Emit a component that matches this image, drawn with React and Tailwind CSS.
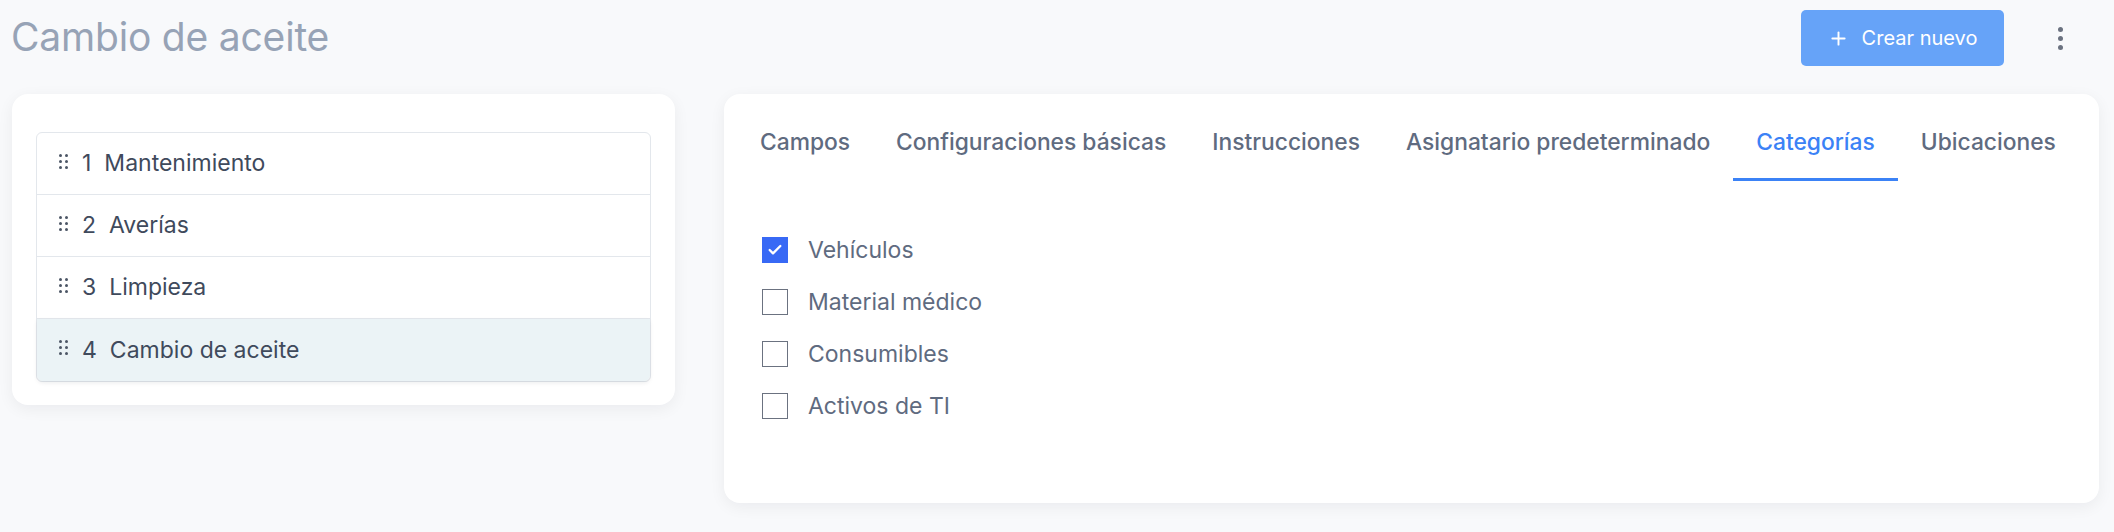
import { Check, Plus } from 'lucide-react';

const steps = [
    { n: 1, label: 'Mantenimiento' },
    { n: 2, label: 'Averías' },
    { n: 3, label: 'Limpieza' },
    { n: 4, label: 'Cambio de aceite', active: true },
];

const tabs = ['Campos', 'Configuraciones básicas', 'Instrucciones', 'Asignatario predeterminado', 'Categorías', 'Ubicaciones'];

const categories = [
    { label: 'Vehículos', checked: true },
    { label: 'Material médico' },
    { label: 'Consumibles' },
    { label: 'Activos de TI' },
];

function DragHandle() {
    return (
        <div className="grid grid-cols-2 gap-x-[3px] gap-y-[3px] w-[9px] -mt-[5px]">
            {[0, 1, 2, 3, 4, 5].map((i) => (
                <span key={i} className="w-[3px] h-[3px] rounded-full bg-[#4b5565]" />
            ))}
        </div>
    );
}

export default function App() {
    return (
        <div className="min-h-screen bg-[#f8f9fb] font-['Inter',sans-serif] pb-10">
            {/* Header */}
            <div className="h-[76px] flex items-center justify-between pl-[11px] pr-[34px]">
                <h1 className="text-[39px] font-normal text-[#97a3b6] tracking-[-0.2px] leading-none -mt-[3px]">Cambio de aceite</h1>
                <div className="flex items-center gap-[36px]">
                    <button className="h-[56px] w-[203px] rounded-[5px] bg-[#66a3f8] text-white flex items-center justify-center gap-[13px] text-[20px]">
                        <Plus size={21} strokeWidth={2.2} />
                        <span>Crear nuevo</span>
                    </button>
                    <div className="w-[40px] flex flex-col items-center gap-[4px]">
                        <span className="w-[5px] h-[5px] rounded-full bg-[#6b7280]" />
                        <span className="w-[5px] h-[5px] rounded-full bg-[#6b7280]" />
                        <span className="w-[5px] h-[5px] rounded-full bg-[#6b7280]" />
                    </div>
                </div>
            </div>

            <div className="mt-[18px] pl-[12px] pr-[15px] flex items-start gap-[49px]">
                {/* Steps card */}
                <div className="w-[663px] shrink-0 rounded-[16px] bg-white shadow-[0_4px_16px_rgba(15,23,42,0.06)] pt-[38px] px-[24px] pb-[23px]">
                    <div className="rounded-[6px] border border-[#e3e7ec]">
                        {steps.map((s) => (
                            <div
                                key={s.n}
                                className={`h-[62px] flex items-center pl-[22px] text-[23px] text-[#3f4a5c] ${s.n !== 4 ? 'border-b border-[#e3e7ec]' : ''} ${s.active ? 'bg-[#ebf3f6] shadow-[0_2px_4px_rgba(15,23,42,0.08)] rounded-b-[6px]' : ''}`}
                            >
                                <DragHandle />
                                <span className="ml-[14px]">{s.n}</span>
                                <span className="ml-[13px]">{s.label}</span>
                            </div>
                        ))}
                    </div>
                </div>

                {/* Settings card */}
                <div className="flex-1 min-w-0 h-[409px] rounded-[16px] bg-white shadow-[0_4px_16px_rgba(15,23,42,0.06)] pt-[34px] px-[13px]">
                    <div className="flex">
                        {tabs.map((t) => (
                            <div
                                key={t}
                                className={`shrink-0 whitespace-nowrap px-[23px] pb-[22px] border-b-[3px] text-[22.8px] font-medium leading-[28px] ${t === 'Categorías' ? 'border-[#3b82f6] text-[#3b82f6]' : 'border-transparent text-[#5f6b80]'}`}
                            >
                                {t}
                            </div>
                        ))}
                    </div>

                    <div className="mt-[56px] pl-[25px] flex flex-col gap-[26px]">
                        {categories.map((c) => (
                            <label key={c.label} className="flex items-center gap-[20px] text-[23px] leading-[26px] text-[#5f6b80]">
                                {c.checked ? (
                                    <span className="w-[26px] h-[26px] bg-[#3869f5] flex items-center justify-center">
                                        <Check size={16} strokeWidth={3.5} className="text-white" />
                                    </span>
                                ) : (
                                    <span className="w-[26px] h-[26px] border-[1.5px] border-[#6b7280] bg-white" />
                                )}
                                <span>{c.label}</span>
                            </label>
                        ))}
                    </div>
                </div>
            </div>
        </div>
    );
}
